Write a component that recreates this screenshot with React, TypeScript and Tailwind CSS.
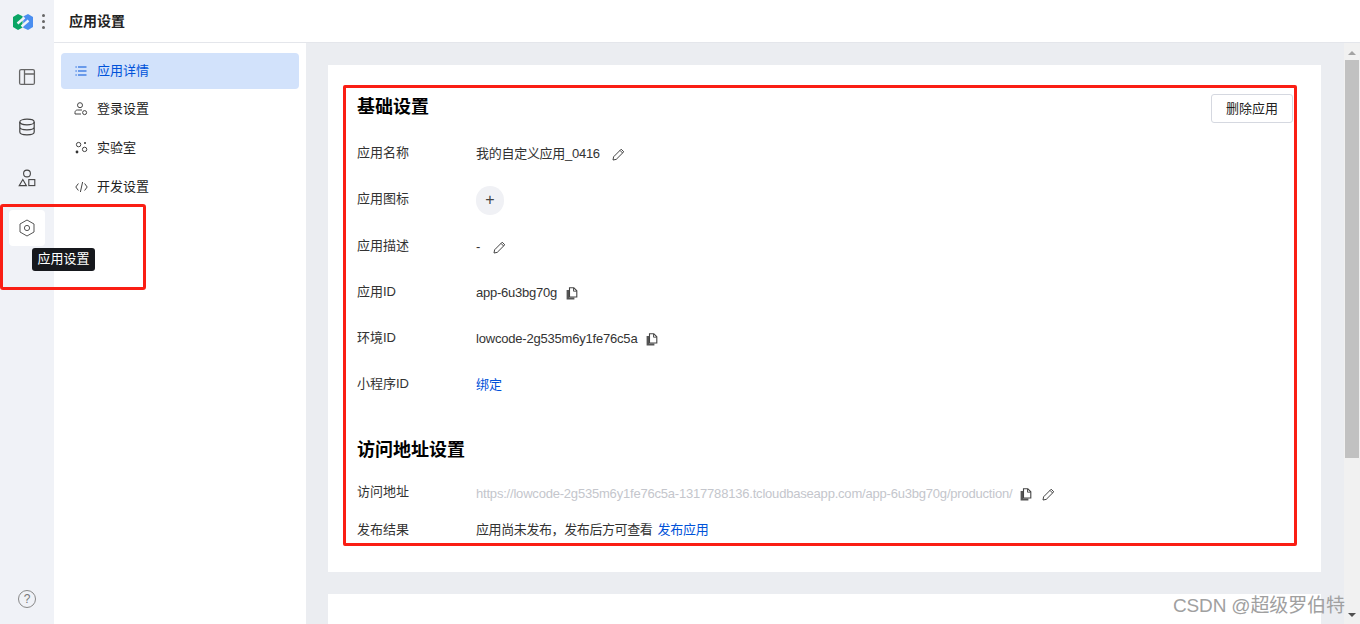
import React from "react";

const Logo = () => (
  <svg width="20" height="16" viewBox="0 0 20 16">
    <path d="M5 0L9.6 2.2V13.6L5 16L0 13V3Z" fill="#0aa564" />
    <path d="M15 0L20 3V13L15 16L10.2 13.8V2.4Z" fill="#4a8ef0" />
    <path d="M4.5 9.5L11.5 3.5M8.5 12.5L15.5 6.5" stroke="#f0f2f7" strokeWidth="2.4" fill="none" />
  </svg>
);

const LayoutIcon = () => (
  <svg width="18" height="18" viewBox="0 0 18 18" fill="none" stroke="#666" strokeWidth="1.3">
    <rect x="1.6" y="1.6" width="14.8" height="14.8" rx="1.5" />
    <path d="M6.5 1.6V16.4M6.5 6H16.4" />
  </svg>
);

const DbIcon = () => (
  <svg width="18" height="18" viewBox="0 0 18 18" fill="none" stroke="#444" strokeWidth="1.2">
    <ellipse cx="9" cy="4" rx="7.2" ry="2.8" />
    <path d="M1.8 4V14C1.8 15.6 5 16.8 9 16.8S16.2 15.6 16.2 14V4M1.8 9C1.8 10.6 5 11.8 9 11.8S16.2 10.6 16.2 9" />
  </svg>
);

const ShapesIcon = () => (
  <svg width="18" height="18" viewBox="0 0 18 18" fill="none" stroke="#444" strokeWidth="1.1">
    <circle cx="9" cy="4.5" r="3.4" />
    <path d="M4.8 10.5L8.4 16.6H1.2Z" />
    <rect x="10.8" y="10.6" width="6" height="6" />
  </svg>
);

const HexIcon = () => (
  <svg width="18" height="18" viewBox="0 0 18 18" fill="none" stroke="#555" strokeWidth="1">
    <path d="M9 1L16 5V13L9 17L2 13V5Z" />
    <circle cx="9" cy="9" r="2.6" />
  </svg>
);

const ListIcon = () => (
  <svg width="12" height="12" viewBox="0 0 12 12" fill="none" stroke="#0052d9" strokeWidth="1">
    <path d="M3 2H11.5M3 6H11.5M3 10H11.5M0.5 2H1.7M0.5 6H1.7M0.5 10H1.7" />
  </svg>
);

const UserIcon = () => (
  <svg width="14" height="14" viewBox="0 0 14 14" fill="none" stroke="#444" strokeWidth="1">
    <circle cx="6" cy="3.2" r="2.5" />
    <path d="M8 8H3.5C2 8 1 9 1 10.5V12H7" />
    <circle cx="10.6" cy="10.6" r="2" />
  </svg>
);

const LabIcon = () => (
  <svg width="13" height="13" viewBox="0 0 13 13" fill="none" stroke="#444" strokeWidth="1">
    <circle cx="3.6" cy="3.6" r="2.2" />
    <circle cx="9.6" cy="8.4" r="2.2" />
    <circle cx="2" cy="11" r="1.4" fill="#333" stroke="none" />
    <circle cx="10" cy="2" r="1" fill="#333" stroke="none" />
  </svg>
);

const CodeIcon = () => (
  <svg width="13" height="12" viewBox="0 0 13 12" fill="none" stroke="#444" strokeWidth="1">
    <path d="M3.4 2.5L0.8 6L3.4 9.5M9.6 2.5L12.2 6L9.6 9.5M7.6 1L5.4 11" />
  </svg>
);

const PencilIcon = () => (
  <svg width="13" height="13" viewBox="0 0 13 13" fill="none" stroke="#444" strokeWidth="1">
    <path d="M1 12L1.6 8.8L9.2 1.2L11.8 3.8L4.2 11.4Z" />
    <path d="M8 2.4L10.6 5" />
  </svg>
);

const CopyIcon = () => (
  <svg width="12" height="13" viewBox="0 0 12 13" fill="none">
    <path d="M0.6 3H3V10.4H8.4V12.4H0.6Z" fill="#555" />
    <path d="M3.5 0.8H7.8L10.8 3.8V10H3.5Z" stroke="#444" strokeWidth="1.1" fill="#fff" />
    <path d="M7.5 1V4.2H10.7" stroke="#444" strokeWidth="0.9" />
  </svg>
);

const navItems = [
  { icon: <ListIcon />, label: "应用详情", active: true },
  { icon: <UserIcon />, label: "登录设置", active: false },
  { icon: <LabIcon />, label: "实验室", active: false },
  { icon: <CodeIcon />, label: "开发设置", active: false },
];

const Row = ({ label, children }: { label: string; children: React.ReactNode }) => (
  <div className="flex h-[46px] items-center">
    <div className="w-[119px] shrink-0 -translate-y-[1px]">{label}</div>
    <div className="flex items-center">{children}</div>
  </div>
);

export default function App() {
  return (
    <div
      className="relative flex h-[624px] w-[1360px] overflow-hidden bg-white text-[13px] text-[#333]"
      style={{ fontFamily: '"Liberation Sans", "Noto Sans CJK SC", sans-serif' }}
    >
      {/* left rail */}
      <div className="flex w-[54px] shrink-0 flex-col items-center bg-[#f0f2f7]">
        <div className="flex h-[43px] w-full items-center pl-[13px]">
          <Logo />
          <div className="ml-[9px] flex flex-col gap-[3px]">
            <span className="h-[3px] w-[3px] rounded-full bg-[#666]" />
            <span className="h-[3px] w-[3px] rounded-full bg-[#666]" />
            <span className="h-[3px] w-[3px] rounded-full bg-[#666]" />
          </div>
        </div>
        <div className="mt-[16px] flex flex-col gap-[14px]">
          <div className="flex h-[36px] w-[36px] items-center justify-center"><LayoutIcon /></div>
          <div className="flex h-[36px] w-[36px] items-center justify-center"><DbIcon /></div>
          <div className="mt-[1px] flex h-[36px] w-[36px] items-center justify-center"><ShapesIcon /></div>
          <div className="flex h-[36px] w-[36px] items-center justify-center rounded bg-white"><HexIcon /></div>
        </div>
        <div className="mt-auto mb-[16px] flex h-[18px] w-[18px] items-center justify-center rounded-full border border-[#888] text-[12px] text-[#777]">?</div>
      </div>

      <div className="flex min-w-0 flex-1 flex-col">
        <div className="flex h-[43px] shrink-0 items-center border-b border-[#e4e6eb] pt-[1px] pl-[15px] text-[14px] font-bold text-[#222]">
          应用设置
        </div>
        <div className="flex min-h-0 flex-1">
          {/* secondary nav */}
          <div className="flex w-[252px] shrink-0 flex-col px-[7px] pt-[10px]">
            {navItems.map((item) => (
              <div
                key={item.label}
                className={
                  item.active
                    ? "flex h-[36px] items-center rounded bg-[#d2e2fb] text-[#0052d9]"
                    : "flex h-[39px] items-center text-[#222]"
                }
              >
                <div className="flex w-[36px] justify-center pl-[4px]">{item.icon}</div>
                <span>{item.label}</span>
              </div>
            ))}
          </div>

          {/* content */}
          <div className="flex min-w-0 flex-1 flex-col gap-[22px] bg-[#ebedf1] pt-[22px] pl-[22px] pr-[23px]">
            <div className="h-[507px] shrink-0 bg-white pt-[29px] pl-[29px] pr-[28px]">
              <div className="mb-[8px] flex h-[29px] items-start justify-between">
                <h2 className="text-[18px] leading-[26px] font-bold text-black">基础设置</h2>
                <button className="h-[29px] w-[82px] rounded-[3px] border border-[#d5d8e0] bg-white text-[13px] text-[#222]">删除应用</button>
              </div>
              <Row label="应用名称">
                <span className="tracking-[-0.28px]">我的自定义应用_0416</span>
                <span className="ml-[12px] flex"><PencilIcon /></span>
              </Row>
              <Row label="应用图标">
                <div className="flex h-[29px] w-[28px] items-center justify-center rounded-full bg-[#f0f1f5] text-[16px] text-[#444]">+</div>
              </Row>
              <div className="h-[1px]" />
              <Row label="应用描述">
                <span>-</span>
                <span className="ml-[13px] flex"><PencilIcon /></span>
              </Row>
              <Row label="应用ID">
                <span className="tracking-[-0.25px]">app-6u3bg70g</span>
                <span className="ml-[9px] flex"><CopyIcon /></span>
              </Row>
              <Row label="环境ID">
                <span className="tracking-[-0.2px]">lowcode-2g535m6y1fe76c5a</span>
                <span className="ml-[9px] flex"><CopyIcon /></span>
              </Row>
              <Row label="小程序ID">
                <span className="text-[#0052d9]">绑定</span>
              </Row>
              <h2 className="mt-[28px] h-[30px] text-[18px] leading-[28px] font-bold text-black">访问地址设置</h2>
              <div className="mt-[14px] flex h-[28px] items-center">
                <div className="w-[119px] shrink-0 -translate-y-[2px]">访问地址</div>
                <span className="tracking-[-0.2px] text-[#c4c6cc]">https://lowcode-2g535m6y1fe76c5a-1317788136.tcloudbaseapp.com/app-6u3bg70g/production/</span>
                <span className="ml-[8px] flex"><CopyIcon /></span>
                <span className="ml-[10px] flex"><PencilIcon /></span>
              </div>
              <div className="mt-[8px] flex h-[28px] items-center">
                <div className="w-[119px] shrink-0">发布结果</div>
                <span className="tracking-[-0.4px]">应用尚未发布，发布后方可查看</span>
                <span className="ml-[5px] tracking-[-0.25px] text-[#0052d9]">发布应用</span>
              </div>
            </div>
            <div className="h-[200px] shrink-0 bg-white" />
          </div>

          {/* scrollbar */}
          <div className="relative w-[16px] shrink-0 bg-[#f1f1f1]">
            <div className="absolute left-1/2 top-[8px] h-0 w-0 -translate-x-1/2 border-x-[4px] border-b-[4px] border-x-transparent border-b-[#a3a3a3]" />
            <div className="absolute left-[1px] top-[17px] h-[398px] w-[14px] bg-[#c1c1c1]" />
            <div className="absolute left-1/2 bottom-[7px] h-0 w-0 -translate-x-1/2 border-x-[4px] border-t-[4px] border-x-transparent border-t-[#505050]" />
          </div>
        </div>
      </div>

      {/* tooltip + annotation overlays */}
      <div className="absolute left-[32px] top-[248px] flex h-[23px] w-[63px] items-center justify-center rounded-[3px] bg-[#16181d] pb-[2px] text-white">应用设置</div>
      <div className="pointer-events-none absolute left-[0px] top-[204px] h-[86px] w-[146px] rounded-[3px] border-[3px] border-[#fa1e14]" />
      <div className="pointer-events-none absolute left-[343px] top-[85px] h-[461px] w-[954px] rounded-[2px] border-[3px] border-[#fa1e14]" />
      <div className="absolute left-[1173px] top-[594px] text-[19px] leading-[24px] tracking-[-0.15px] text-[#a0a0a0]">CSDN @超级罗伯特</div>
    </div>
  );
}
